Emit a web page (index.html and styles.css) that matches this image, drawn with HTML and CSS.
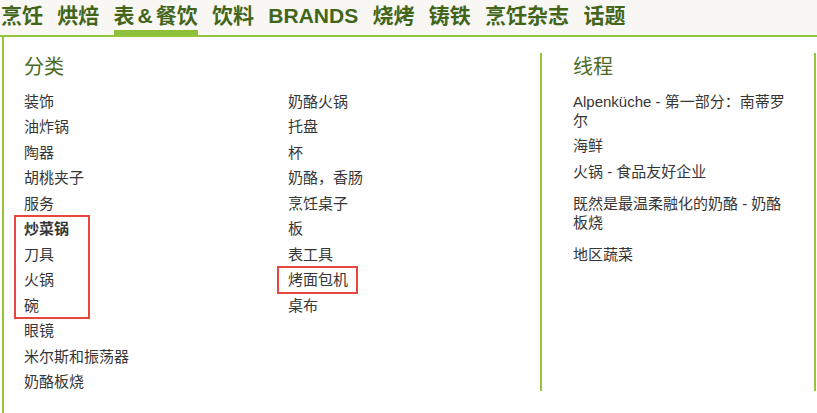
FILE: index.html
```html
<!DOCTYPE html>
<html lang="zh">
<head>
    <meta charset="UTF-8">
    <title>表&amp;餐饮</title>
    <link rel="stylesheet" href="styles.css">
</head>
<body>
    <!-- Hoofdmenu -->
    <nav class="main-nav">
        <a href="#">烹饪</a>
        <a href="#">烘焙</a>
        <a href="#" class="active">表<span class="amp">&amp;</span>餐饮</a>
        <a href="#">饮料</a>
        <a href="#">BRANDS</a>
        <a href="#">烧烤</a>
        <a href="#">铸铁</a>
        <a href="#">烹饪杂志</a>
        <a href="#">话题</a>
    </nav>

    <!-- Dropdown paneel -->
    <div class="panel">
        <div class="col">
            <h2>分类</h2>
            <ul class="links">
                <li><a href="#">装饰</a></li>
                <li><a href="#">油炸锅</a></li>
                <li><a href="#">陶器</a></li>
                <li><a href="#">胡桃夹子</a></li>
                <li><a href="#">服务</a></li>
                <li class="mark mark-group">
                    <ul class="links">
                        <li><a href="#" class="current">炒菜锅</a></li>
                        <li><a href="#">刀具</a></li>
                        <li><a href="#">火锅</a></li>
                        <li><a href="#">碗</a></li>
                    </ul>
                </li>
                <li><a href="#">眼镜</a></li>
                <li><a href="#">米尔斯和振荡器</a></li>
                <li><a href="#">奶酪板烧</a></li>
            </ul>
        </div>
        <div class="col">
            <h2 class="spacer">&nbsp;</h2>
            <ul class="links">
                <li><a href="#">奶酪火锅</a></li>
                <li><a href="#">托盘</a></li>
                <li><a href="#">杯</a></li>
                <li><a href="#">奶酪，香肠</a></li>
                <li><a href="#">烹饪桌子</a></li>
                <li><a href="#">板</a></li>
                <li><a href="#">表工具</a></li>
                <li class="mark mark-single"><a href="#">烤面包机</a></li>
                <li><a href="#">桌布</a></li>
            </ul>
        </div>
        <div class="col threads">
            <h2>线程</h2>
            <ul class="links">
                <li><a href="#">Alpenküche - 第一部分：南蒂罗尔</a></li>
                <li><a href="#">海鲜</a></li>
                <li><a href="#">火锅 - 食品友好企业</a></li>
                <li class="spaced"><a href="#">既然是最温柔融化的奶酪 - 奶酪板烧</a></li>
                <li class="spaced"><a href="#">地区蔬菜</a></li>
            </ul>
        </div>
    </div>
</body>
</html>
```

FILE: styles.css
```css
body {
    margin: 0;
    font-family: 'Liberation Sans', 'Noto Sans CJK SC', sans-serif;
    background: #ffffff;
    color: #363636;
    overflow: hidden;
}
.main-nav {
    display: flex;
    gap: 14.3px;
    height: 35px;
    padding-left: 1px;
    background-color: #f8f7f3;
    border-bottom: 2px solid #93c43c;
}
.main-nav a {
    display: block;
    padding-top: 1px;
    line-height: 29px;
    border-bottom: 5px solid transparent;
    color: #42651a;
    font-size: 21px;
    font-weight: 700;
    text-decoration: none;
    white-space: nowrap;
}
.main-nav a.active {
    border-bottom-color: #8dbf3a;
}
.main-nav .amp {
    margin: 0 3px;
}
.panel {
    display: grid;
    grid-template-columns: 264px 252px 276px;
    align-items: start;
    margin-left: 2px;
    padding: 16px 0 18px 20px;
    border-left: 2px solid #93c43c;
}
.col h2 {
    margin: 0 0 7.5px;
    font-size: 20px;
    font-weight: 400;
    line-height: 28px;
    color: #4a6a1f;
}
.links {
    list-style: none;
    margin: 0;
    padding: 0;
}
.links li {
    padding: 3px 0 3.5px;
    font-size: 15px;
    line-height: 19px;
}
.links a {
    color: #363636;
    text-decoration: none;
}
.links a.current {
    font-weight: 700;
}
/* rode markeringen */
.mark {
    outline: 2px solid #e8453c;
    outline-offset: -1px;
}
.links li.mark-group {
    padding: 0;
    width: 65px;
    margin-left: -9px;
    padding-left: 9px;
}
.links li.mark-single {
    width: 69px;
    margin-left: -10px;
    padding-left: 10px;
}
.threads {
    height: 338px;
    box-sizing: border-box;
    padding: 0 20px 0 31px;
    border-left: 2px solid #93c43c;
    border-right: 2px solid #93c43c;
}
.threads .links li.spaced {
    margin-top: 6.5px;
}
```
